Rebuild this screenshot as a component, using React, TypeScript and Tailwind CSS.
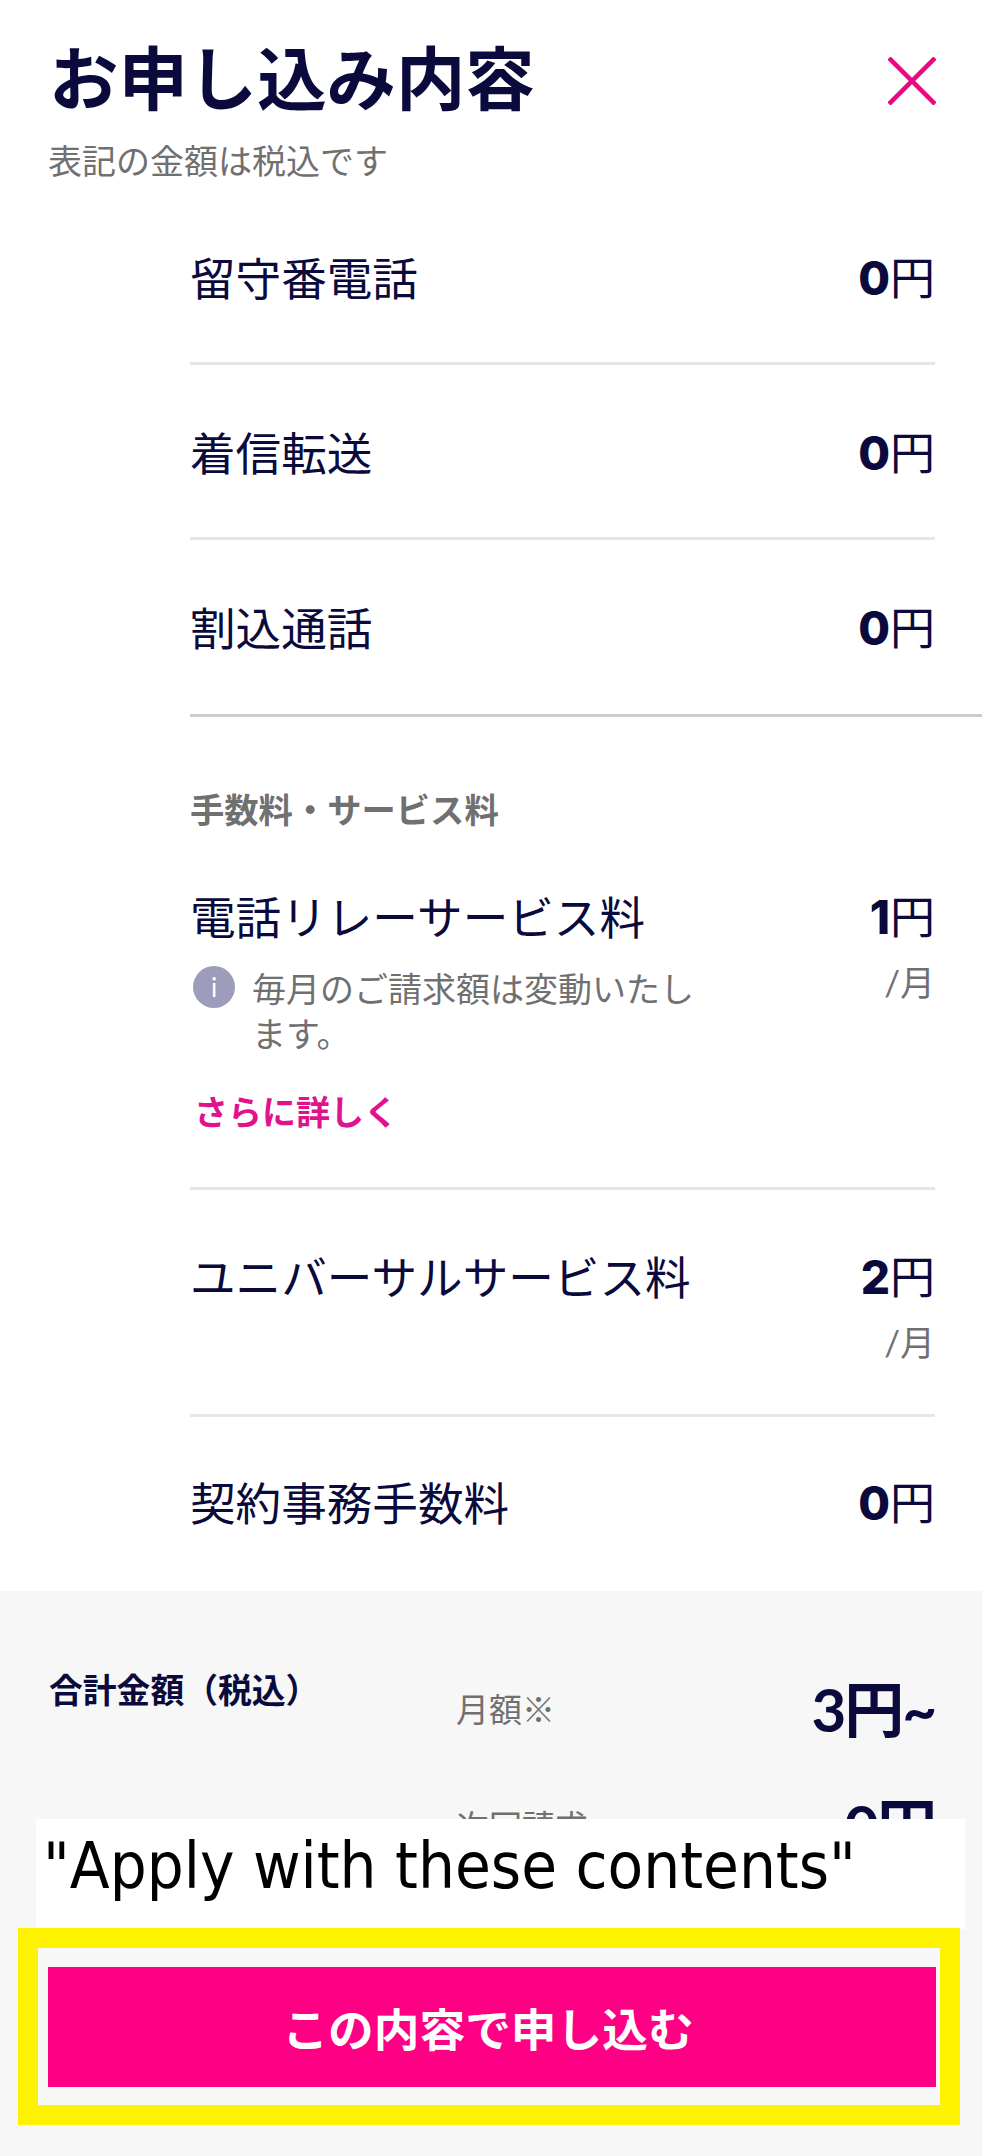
const jp = "font-['Lato','Noto_Sans_CJK_JP',sans-serif]";

function Price({ value, perMonth }: { value: string; perMonth?: boolean }) {
  return (
    <div className="flex flex-col items-end">
      <div className="flex items-baseline text-[45px] leading-[45px] text-[#0a0a3c]">
        <span className="font-['Inter',sans-serif] text-[46px] font-extrabold">{value}</span>
        <span>円</span>
      </div>
      {perMonth && (
        <div className="mt-[20px] text-[35px] leading-[45px] text-[#707070]">/月</div>
      )}
    </div>
  );
}

function Row({ label, value, last }: { label: string; value: string; last?: boolean }) {
  return (
    <div
      className={
        "flex justify-between pt-[66px] " +
        (last ? "h-[174px]" : "h-[175px] border-b-[3px] border-[#e6e6e6]")
      }
    >
      <div className="text-[45.6px] leading-[45px] text-[#0a0a3c]">{label}</div>
      <Price value={value} />
    </div>
  );
}

export default function App() {
  return (
    <div className={`relative flex h-[2156px] w-[982px] flex-col overflow-hidden bg-white ${jp}`}>
      <header className="flex justify-between pl-[49px] pr-[46px] pt-[45px]">
        <div>
          <h1 className="text-[69.4px] font-bold leading-[68px] text-[#0a0a3c]">お申し込み内容</h1>
          <p className="-ml-[1px] mt-[28px] text-[34px] leading-[40px] text-[#707070]">表記の金額は税込です</p>
        </div>
        <svg className="mt-[12px] h-[48px] w-[48px]" viewBox="0 0 48 48" fill="none" stroke="#e6097f" strokeWidth="4.5">
          <path d="M1 1 L47 47 M47 1 L1 47" />
        </svg>
      </header>

      <div className="ml-[190px] mr-[47px] mt-[9px]">
        <Row label="留守番電話" value="0" />
        <Row label="着信転送" value="0" />
        <Row label="割込通話" value="0" last />
      </div>
      <div className="ml-[190px] h-[3px] bg-[#cccccc]" />

      <section className="ml-[190px] mr-[47px] flex-1">
        <h2 className="mt-[73px] text-[34.3px] font-bold leading-[40px] text-[#707070]">手数料・サービス料</h2>

        <div className="mt-[65px] border-b-[3px] border-[#e6e6e6] pb-[55px]">
          <div className="flex justify-between">
            <div>
              <div className="text-[45.6px] leading-[45px] text-[#0a0a3c]">電話リレーサービス料</div>
              <div className="mt-[25px] flex items-start pl-[3px]">
                <div className="mt-[1px] flex h-[42px] w-[42px] shrink-0 items-center justify-center rounded-full bg-[#9d9dbb] text-[26px] leading-none text-white">
                  i
                </div>
                <p className="mt-[1px] ml-[17px] w-[446px] text-[34px] leading-[45px] text-[#707070]">
                  毎月のご請求額は変動いたします。
                </p>
              </div>
            </div>
            <Price value="1" perMonth />
          </div>
          <a className="ml-[4px] mt-[36px] block text-[34px] font-bold leading-[40px] text-[#e0138c]">さらに詳しく</a>
        </div>

        <div className="flex h-[227px] justify-between border-b-[3px] border-[#e6e6e6] pt-[65px]">
          <div className="text-[45.6px] leading-[45px] text-[#0a0a3c]">ユニバーサルサービス料</div>
          <Price value="2" perMonth />
        </div>

        <div className="flex justify-between pt-[64px]">
          <div className="text-[45.6px] leading-[45px] text-[#0a0a3c]">契約事務手数料</div>
          <Price value="0" />
        </div>
      </section>

      <footer className="flex h-[565px] bg-[#f7f7f8] pl-[49px] pr-[47px]">
        <div className="w-[407px] pt-[79px] text-[33.8px] font-bold leading-[40px] text-[#0a0a3c]">合計金額（税込）</div>
        <div className="flex-1 pt-[85px]">
          <div className="flex items-center justify-between">
            <span className="text-[33px] leading-[66px] text-[#707070]">月額※</span>
            <span className="text-[60px] font-bold leading-[66px] tracking-[-2px] text-[#0a0a3c]">3円~</span>
          </div>
          <div className="mt-[51px] flex items-center justify-between">
            <span className="text-[33px] leading-[66px] text-[#707070]">次回請求</span>
            <span className="text-[60px] font-bold leading-[66px] tracking-[-2px] text-[#0a0a3c]">0円</span>
          </div>
        </div>
      </footer>

      <div className="absolute left-[36px] top-[1819px] h-[110px] w-[929px] bg-white pl-[7px] font-['DejaVu_Sans_Condensed','DejaVu_Sans',sans-serif] text-[64.8px] leading-[94px] text-black">
        "Apply with these contents"
      </div>
      <div className="absolute left-[18px] top-[1928px] h-[197px] w-[942px] border-[20px] border-[#fff200] bg-[#f7f7f8] px-[10px] pt-[19px]">
        <button className="flex h-[120px] w-[888px] items-center justify-center bg-[#ff0084] pr-[8px] pt-[6px] text-[45.7px] font-bold text-[#fff]">
          この内容で申し込む
        </button>
      </div>
    </div>
  );
}
